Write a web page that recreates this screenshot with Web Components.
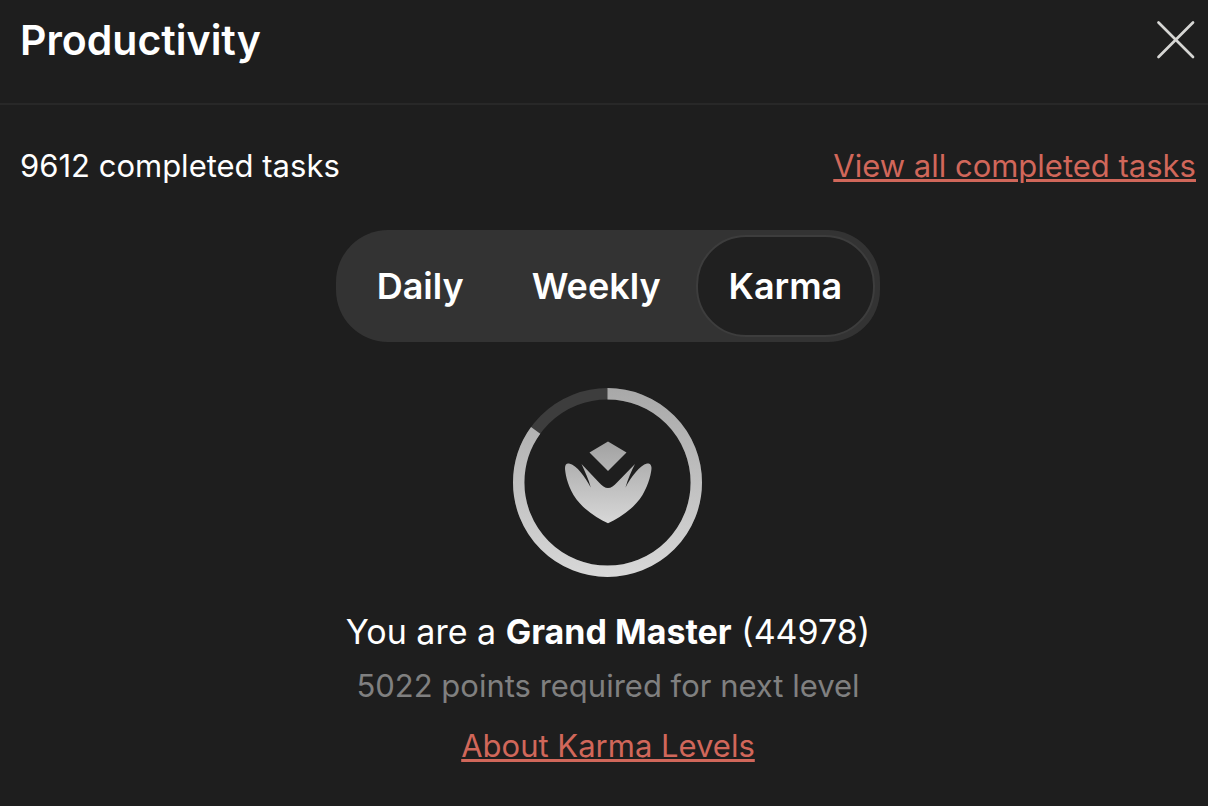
<!DOCTYPE html>
<html lang="en">
<head>
<meta charset="utf-8">
<title>Productivity</title>
<style>
body { margin: 0; min-height: 100vh; background: #1e1e1e; color: #fff; font-family: Inter, "Liberation Sans", sans-serif; }
</style>
</head>
<body>
<productivity-panel>
  <panel-header slot="header">Productivity</panel-header>
  <task-summary count="9612"></task-summary>
  <view-switch>
    <button type="button" aria-pressed="false">Daily</button>
    <button type="button" aria-pressed="false">Weekly</button>
    <button type="button" aria-pressed="true">Karma</button>
  </view-switch>
  <karma-ring></karma-ring>
  <karma-status points="44978" remaining="5022">Grand Master</karma-status>
</productivity-panel>
<script>
const define = (name, markup, setup) => customElements.define(name, class extends HTMLElement {
  constructor() {
    super();
    this.attachShadow({ mode: "open" }).innerHTML = markup;
  }
  connectedCallback() { if (setup) setup(this, this.shadowRoot); }
});

define("productivity-panel", `
<style>
:host { display: block; }
main { display: flex; flex-direction: column; padding: 41px 12px 20px 20px; }
</style>
<slot name="header"></slot>
<main><slot></slot></main>`);

define("panel-header", `
<style>
:host { display: flex; align-items: center; justify-content: space-between; padding: 0 12px 23px 20px; border-bottom: 2px solid #282828; }
h1 { margin: 0; font-size: 41px; line-height: 80px; font-weight: 600; }
button { display: block; padding: 0; border: 0; background: none; color: #d6d6d4; cursor: pointer; }
svg { display: block; }
</style>
<h1><slot></slot></h1>
<button type="button" aria-label="Close"><svg width="40" height="40" viewBox="0 0 40 40" fill="none" stroke="currentColor" stroke-width="2.7" stroke-linecap="round"><path d="M2.500 2.500 37 37M37 2.500 2.500 37"/></svg></button>`);

define("task-summary", `
<style>
:host { display: flex; align-items: baseline; justify-content: space-between; font-size: 31px; line-height: 40px; }
a { color: #d1675a; text-decoration-thickness: 3px; text-underline-offset: 2px; }
</style>
<span><span id="count"></span> completed tasks</span>
<a href="#completed">View all completed tasks</a>`,
(host, root) => { root.getElementById("count").textContent = host.getAttribute("count"); });

define("view-switch", `
<style>
:host { display: flex; align-self: center; gap: 2px; margin-top: 44px; padding: 5px 5px 5px 8px; border-radius: 52px; background: #333; }
::slotted(button) { height: 102px; padding: 0 31px; border: 2px solid transparent; border-radius: 50px; background: none; color: #fff; font: 600 36px/44px Inter, "Liberation Sans", sans-serif; cursor: pointer; }
::slotted(button[aria-pressed="true"]) { background: #202020; border-color: #3d3d3d; }
</style>
<slot></slot>`);

define("karma-ring", `
<style>
:host { display: block; align-self: center; margin-top: 46px; }
svg { display: block; }
</style>
<svg width="190" height="190" viewBox="0 0 190 190" role="img" aria-label="Karma progress">
<defs>
<linearGradient id="ring" gradientUnits="userSpaceOnUse" x1="190" y1="0" x2="0" y2="0"><stop stop-color="#a8a8a8"/><stop offset="1" stop-color="#d8d8d8"/></linearGradient>
<linearGradient id="lotus" gradientUnits="userSpaceOnUse" x1="0" y1="54" x2="0" y2="136"><stop stop-color="#a2a2a2"/><stop offset="1" stop-color="#d8d8d8"/></linearGradient>
</defs>
<circle cx="94.5" cy="94.5" r="88.8" fill="none" stroke="#3d3d3d" stroke-width="11.4"/>
<circle cx="94.5" cy="94.5" r="88.8" fill="none" stroke="url(#ring)" stroke-width="11.4" pathLength="100" stroke-dasharray="85 15" transform="rotate(-90 94.5 94.5)"/>
<path fill="url(#lotus)" d="M95 53.500 113.500 64.500 95 83 76.500 64.500ZM95 135.300C84 130 69 121 60.500 107C54 96 52 84 52 80C52 76 54 75 56 75.500C64 77 72 89 77.800 99.500C75.500 91 72 84 68.500 76L86 94.500C89 98 92 100 95 100C98 100 101 98 104 94.500L122 76C118 84 115 91 112.500 99.500C118 89 127 77 134 75.500C136 75 138.500 76 138.500 80C138.500 84 136 96 129.500 107C121 121 106 130 95 135.300Z"/>
</svg>`);

define("karma-status", `
<style>
:host { display: flex; flex-direction: column; align-items: center; margin-top: 32px; text-align: center; }
p { margin: 0; font-size: 34px; line-height: 44px; }
strong { font-weight: 700; }
.next { margin-top: 12px; font-size: 31px; line-height: 40px; color: #808080; }
a { margin-top: 20px; font-size: 31px; line-height: 40px; color: #d1675a; text-decoration-thickness: 3px; text-underline-offset: 2px; }
</style>
<p>You are a <strong><slot></slot></strong> (<span id="points"></span>)</p>
<p class="next"><span id="remaining"></span> points required for next level</p>
<a href="#karma">About Karma Levels</a>`,
(host, root) => {
  for (const id of ["points", "remaining"]) root.getElementById(id).textContent = host.getAttribute(id);
});
</script>
</body>
</html>
